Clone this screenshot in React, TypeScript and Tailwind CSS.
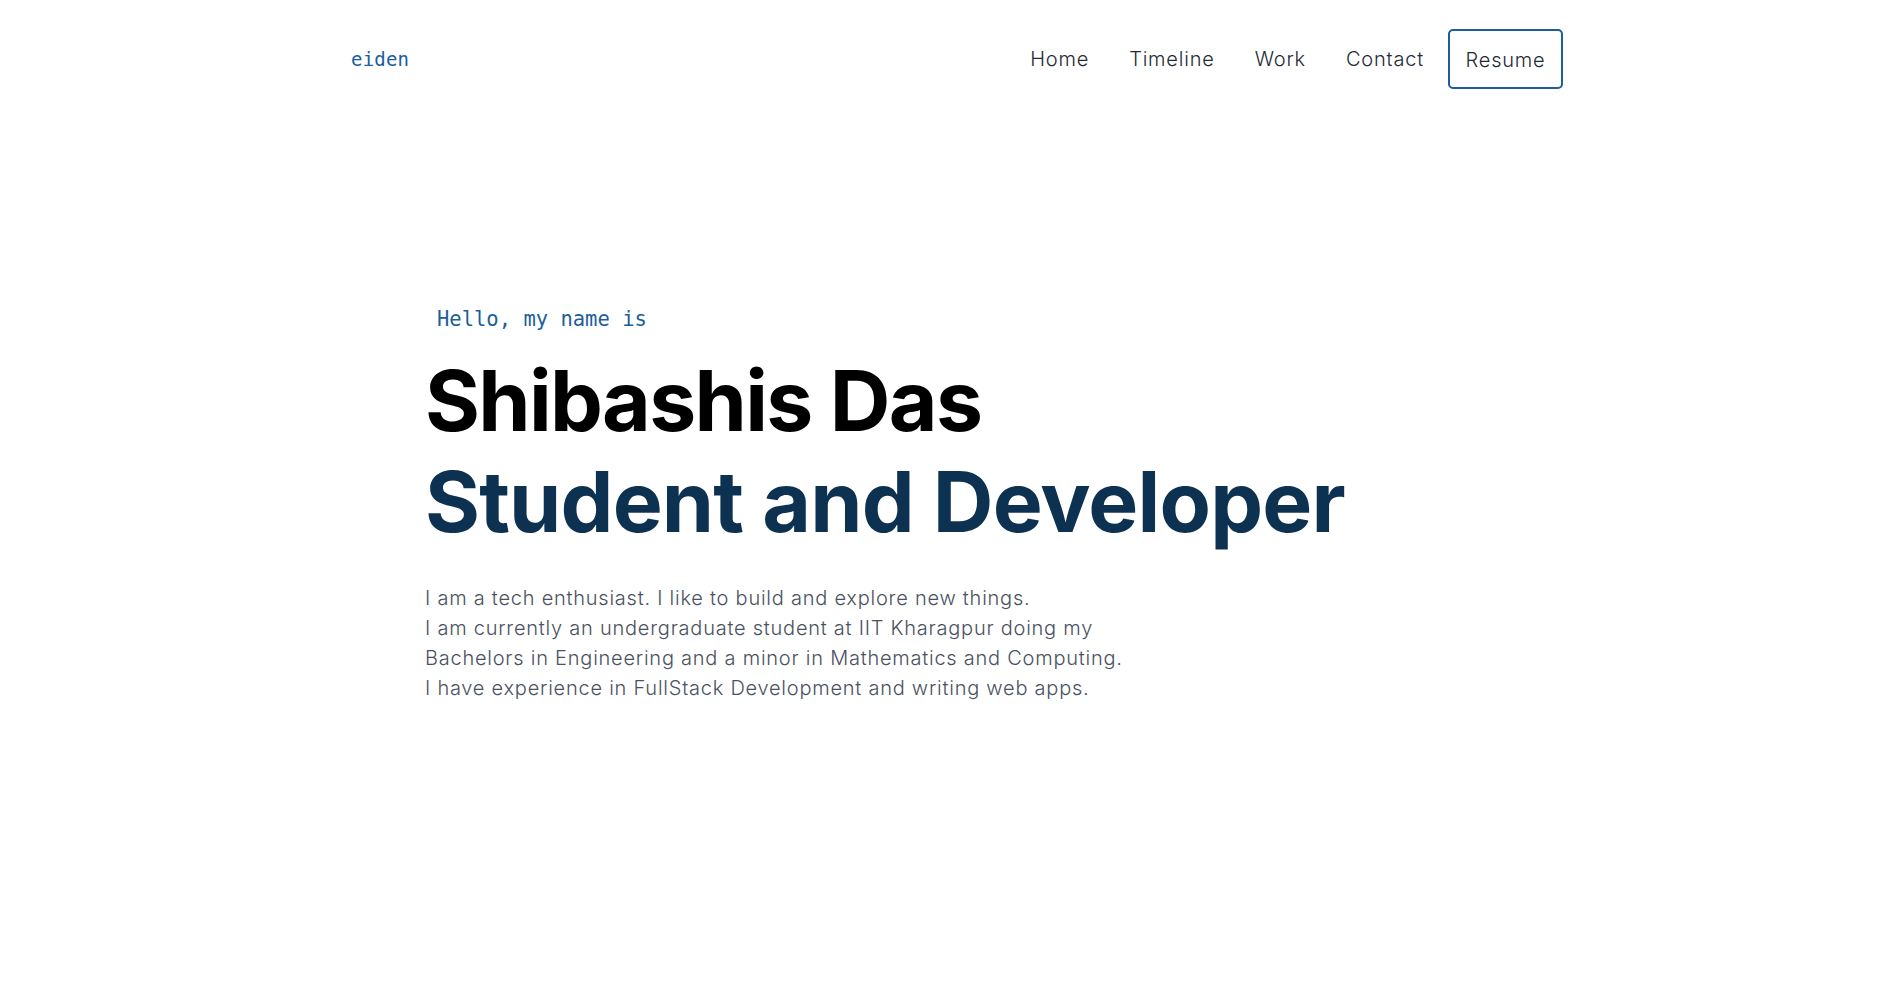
import React from 'react';

const navLinks = ['Home', 'Timeline', 'Work', 'Contact'];

const Header: React.FC = () => (
  <header className="flex items-center justify-between pl-[351px] pr-[334px] pt-[29px]">
    <a className="text-[19px] text-[#1b5e9b] font-['DejaVu_Sans_Mono',monospace] tracking-[0.01em]">eiden</a>
    <nav className="flex items-center">
      {navLinks.map((l) => (
        <a key={l} className="px-[20px] text-[20px] font-light tracking-[0.04em] text-[#252b36] font-['Inter',sans-serif]">
          {l}
        </a>
      ))}
      <button className="ml-[4px] h-[60px] w-[115px] rounded-[5px] border-2 border-[#1b5e9b] pt-[2px] text-[20px] font-light tracking-[0.04em] text-[#252b36] font-['Inter',sans-serif]">
        Resume
      </button>
    </nav>
  </header>
);

const Hero: React.FC = () => (
  <section className="pl-[425px] pt-[215px]">
    <p className="pl-[12px] text-[20.5px] leading-[30px] text-[#1b5e9b] font-['DejaVu_Sans_Mono',monospace]">
      Hello, my name is
    </p>
    <h1 className="mt-[16px] text-[84px] leading-[101px] font-bold tracking-[-0.02em] text-black font-['Inter',sans-serif]">
      Shibashis Das
    </h1>
    <h2 className="text-[84px] leading-[101px] font-bold tracking-[-0.01em] text-[#0c3151] font-['Inter',sans-serif]">
      Student and Developer
    </h2>
    <div className="mt-[31px] text-[20px] leading-[30px] font-light tracking-[0.038em] text-[#4a5261] font-['Inter',sans-serif]">
      <p>I am a tech enthusiast. I like to build and explore new things.</p>
      <p>I am currently an undergraduate student at IIT Kharagpur doing my</p>
      <p>Bachelors in Engineering and a minor in Mathematics and Computing.</p>
      <p>I have experience in FullStack Development and writing web apps.</p>
    </div>
  </section>
);

export default function App() {
  return (
    <div className="min-h-screen w-full bg-white">
      <Header />
      <Hero />
    </div>
  );
}
